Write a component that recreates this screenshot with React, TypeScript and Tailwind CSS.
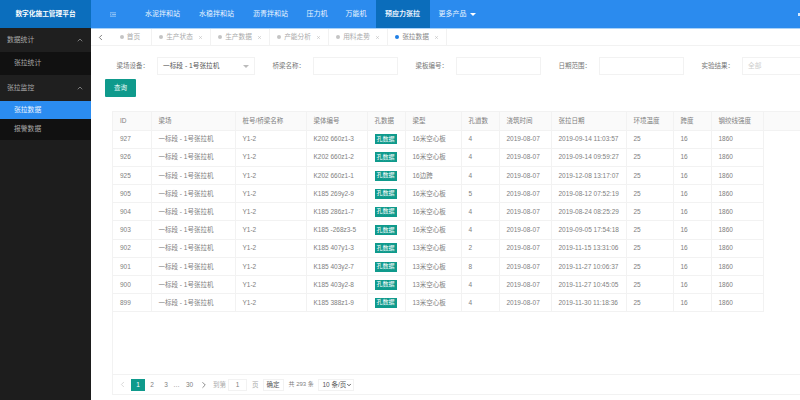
import React from "react";
import { ChevronUp, ChevronLeft, ChevronRight, ChevronDown, X } from "lucide-react";

const rows = [
  ["927","K202 660z1-3","16米空心板","4","2019-09-14 11:03:57"],
  ["926","K202 660z1-2","16米空心板","4","2019-09-14 09:59:27"],
  ["925","K202 660z1-1","16边跨","4","2019-12-08 13:17:07"],
  ["905","K185 269y2-9","16米空心板","5","2019-08-12 07:52:19"],
  ["904","K185 286z1-7","16米空心板","4","2019-08-24 08:25:29"],
  ["903","K185 -268z3-5","16米空心板","4","2019-09-05 17:54:18"],
  ["902","K185 407y1-3","13米空心板","2","2019-11-15 13:31:06"],
  ["901","K185 403y2-7","13米空心板","8","2019-11-27 10:06:37"],
  ["900","K185 403y2-8","13米空心板","4","2019-11-27 10:45:05"],
  ["899","K185 388z1-9","13米空心板","4","2019-11-30 11:18:36"],
];
const heads = ["ID","梁场","桩号/桥梁名称","梁体编号","孔数据","梁型","孔道数","浇筑时间","张拉日期","环境温度","跨度","钢绞线强度"];
const widths = ["w-[38px]","w-[84px]","w-[71px]","w-[61px]","w-[38px]","w-[56px]","w-[38px]","w-[52px]","w-[75px]","w-[47px]","w-[38px]","w-[52px]"];
const tabs = [
  ["首页","w-[43px]",false],
  ["生产状态","w-[59px]",true],
  ["生产数据","w-[59px]",true],
  ["产能分析","w-[59px]",true],
  ["用料走势","w-[59px]",true],
  ["张拉数据","w-[59px]",true],
] as const;
const nav = ["水泥拌和站","水稳拌和站","沥青拌和站","压力机","万能机"];

function Field({ label, w, lw, value, arrow, placeholder }: { label: string; w: string; lw: string; value?: string; arrow?: boolean; placeholder?: string }) {
  return (
    <div className="flex items-center shrink-0">
      <span className={`${lw} text-right pr-[8px] text-[6.5px] text-[#777] whitespace-nowrap`}>{label}</span>
      <div className={`${w} h-[18px] border border-[#f2f2f2] bg-white flex items-center justify-between pl-[5px] pr-[5px] text-[6.7px] text-[#555] whitespace-nowrap`}>
        <span className={placeholder ? "text-[#ccc]" : ""}>{value ?? placeholder}</span>
        {arrow && <span className="w-0 h-0 border-x-[3px] border-x-transparent border-t-[3px] border-t-[#bbb]" />}
      </div>
    </div>
  );
}

export default function App() {
  return (
    <div className="w-[800px] h-[400px] overflow-hidden flex bg-white font-['Liberation_Sans','Noto_Sans_CJK_SC',sans-serif]">
      <aside className="w-[91px] shrink-0 bg-[#1d1d1d] text-[6.8px] text-[#a8a8a8] flex flex-col">
        <div className="h-[28px] bg-[#0b6ebd] text-white font-bold flex items-center justify-center text-[6.7px]">数字化施工管理平台</div>
        <div className="h-[24px] flex items-center justify-between pl-[7px] pr-[7px] bg-[#1f1f1f]">数据统计<ChevronUp size={8} /></div>
        <div className="h-[23px] flex items-center pl-[14px] bg-[#111]">张拉统计</div>
        <div className="h-[26px] flex items-center justify-between pl-[7px] pr-[7px] bg-[#1f1f1f]">张拉监控<ChevronUp size={8} /></div>
        <div className="h-[18px] flex items-center pl-[14px] bg-[#2b8cf0] text-[#e8f2fd]">张拉数据</div>
        <div className="h-[21px] flex items-center pl-[14px] bg-[#111]">报警数据</div>
      </aside>
      <main className="flex-1 min-w-0 flex flex-col">
        <header className="h-[29px] shrink-0 bg-[#2b8bee] border-b border-[#a9d2f8] flex items-stretch text-[#eaf4fe] text-[7px]">
          <div className="w-[44.5px] flex items-center justify-center">
            <svg width="6" height="5" viewBox="0 0 7 5" fill="none" stroke="#bcdcfb" strokeWidth="0.8"><path d="M0 .5h7M2.5 2.5H7M0 4.5h7M.8 1.6v1.8" /></svg>
          </div>
          {nav.map((n) => (
            <div key={n} className={`flex items-center ${n === "压力机" || n === "万能机" ? "px-[9px]" : "px-[9.5px]"}`}>{n}</div>
          ))}
          <div className="w-[54px] bg-[#0b6dbb] font-bold flex items-center justify-center">预应力张拉</div>
          <div className="flex items-center pl-[9px] gap-[3px]">更多产品<span className="w-0 h-0 border-x-[3px] border-x-transparent border-t-[3px] border-t-white" /></div>
          <div className="ml-auto flex items-center"><span className="w-[2px] h-[3px] bg-[#d5e9fd]" /></div>
        </header>
        <nav className="h-[17px] shrink-0 border-b border-[#f2f2f2] flex items-stretch text-[6.7px] text-[#aaa]">
          <div className="w-[18px] flex items-center justify-center text-[#555]"><ChevronLeft size={9} /></div>
          {tabs.map(([t, w, close], i) => (
            <div key={t} className={`${w} border-r border-[#f2f2f2] flex items-center justify-center gap-[3px]`}>
              <span className={`w-[4px] h-[4px] rounded-full ${i === 5 ? "bg-[#1e7fe6]" : "bg-[#c4c4c4]"}`} />
              <span className={i === 5 ? "text-[#888]" : ""}>{t}</span>
              {close && <X size={5} className="ml-[2px]" />}
            </div>
          ))}
        </nav>
        <section className="flex-1 min-h-0 pl-[14px] pt-[11px] flex flex-col">
          <div className="flex h-[18px]">
            <Field label="梁场设备：" lw="w-[52px]" w="w-[98px]" value="一标段 - 1号张拉机" arrow />
            <Field label="桥梁名称：" lw="w-[58px]" w="w-[85px]" />
            <Field label="梁板编号：" lw="w-[58px]" w="w-[85px]" />
            <Field label="日期范围：" lw="w-[58px]" w="w-[85px]" />
            <Field label="实验结果：" lw="w-[58px]" w="w-[60px]" placeholder="全部" />
          </div>
          <div className="mt-[4px] w-[31px] h-[18px] bg-[#0f9a8c] text-[#eafaf8] text-[6.5px] flex items-center justify-center rounded-[1px] shrink-0">查询</div>
          <div className="ml-[7px] mt-[14px] mb-[5px] flex-1 min-h-0 border-l border-t border-b border-[#f2f2f2] flex flex-col text-[6.5px] text-[#808080]">
            <table className="table-fixed border-collapse w-[688px]">
              <thead>
                <tr className="h-[18px] bg-[#fafafa]">
                  {heads.map((h, i) => (
                    <th key={h} className={`${widths[i]} font-normal text-left pl-[7px] border-r border-b border-[#f2f2f2] text-[#808080]`}>{h}</th>
                  ))}
                  <th className="border-b border-[#f2f2f2]" />
                </tr>
              </thead>
              <tbody>
                {rows.map((r) => (
                  <tr key={r[0]} className="h-[18.2px]">
                    {[r[0],"一标段 - 1号张拉机","Y1-2",r[1]].map((c, i) => (
                      <td key={i} className="pl-[7px] border-r border-b border-[#f2f2f2] whitespace-nowrap">{c}</td>
                    ))}
                    <td className="pl-[7px] border-r border-b border-[#f2f2f2]">
                      <span className="inline-flex items-center justify-center w-[22px] h-[10px] bg-[#0f9a8c] text-white text-[6px] align-middle">孔数据</span>
                    </td>
                    {[r[2],r[3],"2019-08-07",r[4],"25","16","1860"].map((c, i) => (
                      <td key={i} className="pl-[7px] border-r border-b border-[#f2f2f2] whitespace-nowrap">{c}</td>
                    ))}
                    <td />
                  </tr>
                ))}
              </tbody>
            </table>
            <div className="flex-1" />
            <div className="h-[20px] shrink-0 border-t border-[#f2f2f2] flex items-center pl-[5px] text-[6.5px] text-[#808080]">
              <ChevronLeft size={9} className="text-[#ccc]" />
              <span className="ml-[4px] w-[14px] h-[12px] bg-[#0f9a8c] text-white flex items-center justify-center">1</span>
              <span className="w-[14px] text-center">2</span>
              <span className="w-[14px] text-center">3</span>
              <span className="w-[7px] text-center">…</span>
              <span className="w-[19px] text-center">30</span>
              <ChevronRight size={10} className="text-[#777]" />
              <span className="ml-[4px] text-[#aaa] whitespace-nowrap">到第</span>
              <span className="ml-[2px] w-[19px] h-[12px] border border-[#f2f2f2] flex items-center justify-center">1</span>
              <span className="ml-[5px] text-[#aaa]">页</span>
              <span className="ml-[4px] w-[21px] h-[12px] border border-[#f2f2f2] flex items-center justify-center text-[#555]">确定</span>
              <span className="ml-[5px] w-[24px] text-[6px] whitespace-nowrap">共 293 条</span>
              <span className="ml-[5px] w-[36px] h-[12px] border border-[#f2f2f2] flex items-center justify-between pl-[4px] pr-[1px] text-[#555] whitespace-nowrap">10 条/页<ChevronDown size={6} strokeWidth={3} className="text-[#222] shrink-0" /></span>
            </div>
          </div>
        </section>
      </main>
    </div>
  );
}
